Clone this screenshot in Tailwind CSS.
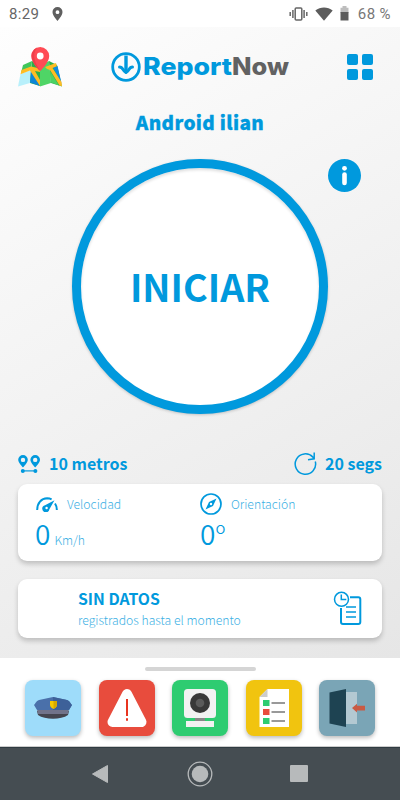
<!DOCTYPE html>
<html lang="es">
<head>
  <meta charset="UTF-8">
  <meta name="viewport" content="width=device-width, initial-scale=1.0">
  <title>ReportNow</title>
  <script src="https://cdn.jsdelivr.net/npm/@tailwindcss/browser@4"></script>
</head>
<body class="w-[400px] h-[800px] overflow-hidden flex flex-col bg-white text-[#0099dd] font-['Noto_Sans_CJK_JP',sans-serif]">

  <!-- Status bar -->
  <div class="h-[27px] shrink-0 flex items-center justify-between px-[9px] font-[Roboto,sans-serif] text-[#666]">
    <div class="flex items-center gap-[13px]">
      <span class="text-[15px] leading-[28px] tracking-[0.3px]">8:29</span>
      <svg class="w-[11px] h-[14px]" viewBox="0 0 11 14" fill="#5f5f5f"><path fill-rule="evenodd" d="M5.500 0A5 5 0 0 0 .5 5c0 3.500 5 9 5 9s5-5.500 5-9a5 5 0 0 0-5-5zm0 3.300a1.900 1.900 0 1 1 0 3.800 1.900 1.900 0 0 1 0-3.800z"/></svg>
    </div>
    <div class="flex items-center">
      <svg class="w-[19px] h-[14px] mr-[7px]" viewBox="0 0 19 14" fill="none" stroke="#666" stroke-width="1.500"><rect x="6.200" y="1" width="6.600" height="12" rx="1"/><path d="M3.900 3v8M1.200 5v4M15.100 3v8M17.800 5v4"/></svg>
      <svg class="w-[18px] h-[14px] mr-[7px]" viewBox="0 0 18 14" fill="#5c5c5c"><path d="M.3 3.600C5.300-.6 12.700-.6 17.700 3.600L9 13.800z"/></svg>
      <svg class="w-[9px] h-[15px] mr-[9px]" viewBox="0 0 9 15"><path fill="#bdbdbd" d="M2.500 0h4v1.800h2V7h-8V1.800h2z"/><path fill="#5c5c5c" d="M.5 6h8v8.500h-8z"/></svg>
      <span class="text-[15px] leading-[28px] tracking-[0.4px] text-[#777]">68 %</span>
    </div>
  </div>

  <!-- Main screen -->
  <main class="h-[631px] shrink-0 flex flex-col px-[18px] bg-linear-150 from-[#fefefe] to-[#e6e6e6]">

    <!-- Header -->
    <header class="h-[80px] flex items-center justify-between">
      <svg class="w-[44px] h-[40px]" viewBox="0 0 44 40">
        <path fill="#3fc65b" d="M5 18l9-4-1 8-10 4z"/>
        <path fill="#b8f0fb" d="M2.500 27L13 23l-1 13-12 3.500z"/>
        <path fill="#2fae4b" d="M14 14l8 4v21l-10-3 1-12z"/>
        <path fill="#0e86d4" d="M13 23l9 16-10-3.500z"/>
        <path fill="#ffbc24" d="M3.500 23L13 19.500l9 2v3.500l-5-1 5 9v6L12 23.500l-9.500 3.800z"/>
        <path fill="#4fd566" d="M22 19l9-5 2 22-11 3.500z"/>
        <path fill="#2fae4b" d="M31 14l8 4 5 21.500L33 36z"/>
        <path fill="#4bd163" d="M32 24l9 14.500-8-3z"/>
        <path fill="#0e8ce0" d="M35 20.500l4.500-1.500 4 17z"/>
        <path fill="#ffbc24" d="M27 20l11-4 .8 3.200-4.300 1.800 9 14 .5 4.300-2.500-.8L32 23l-3-1z"/>
        <path fill="#ff4b55" d="M22.200 0a9 9 0 0 0-9 9c0 7 9 15 9 15s9-8 9-15a9 9 0 0 0-9-9z"/>
        <path fill="#f03e4a" d="M19 .6a9 9 0 0 0-5 11c1 5 5 9.500 8.200 12.400C18 17 13 9 19 .6z"/>
        <circle cx="22.200" cy="9" r="3.400" fill="#fff"/>
      </svg>
      <div class="flex items-center w-[180px] mr-[7px]">
        <svg class="w-[30px] h-[30px] shrink-0" viewBox="0 0 30 30" fill="none" stroke="#0099dd"><circle cx="15" cy="15" r="13.300" stroke-width="2.800"/><path stroke-width="3.400" d="M15 3.500V20"/><path stroke-width="3" stroke-linecap="round" stroke-linejoin="round" d="M8.500 15c1.500 0 2.700 1 3.600 2.600.7 1.300 1.700 2.400 2.900 2.900 1.200-.5 2.200-1.600 2.900-2.900.9-1.600 2.100-2.600 3.600-2.600"/></svg>
        <svg class="w-[148px] h-[34px] ml-[2px] shrink-0 overflow-visible font-[Inter,sans-serif] text-[24px] font-extrabold" viewBox="0 0 148 34"><text x="0" y="25" textLength="89" lengthAdjust="spacingAndGlyphs" fill="#0099dd">Report</text><text x="89" y="25" textLength="57" lengthAdjust="spacingAndGlyphs" fill="#626262">Now</text></svg>
      </div>
      <div class="grid grid-cols-2 gap-[4px] w-[26px] mr-[9px]">
        <span class="h-[11px] rounded-[2px] bg-[#0099dd]"></span>
        <span class="h-[11px] rounded-[2px] bg-[#0099dd]"></span>
        <span class="h-[11px] rounded-[2px] bg-[#0099dd]"></span>
        <span class="h-[11px] rounded-[2px] bg-[#0099dd]"></span>
      </div>
    </header>

    <h1 class="h-[30px] leading-[29px] text-center text-[19px] tracking-[0.350px] font-black [-webkit-text-stroke:0.3px_#0099dd]">Android ilian</h1>

    <!-- Start button -->
    <div class="relative h-[277px] pt-[22px] flex justify-center">
      <button class="w-[256px] h-[255px] rounded-full border-[9px] border-[#0099dd] bg-white pb-[2px] text-[37.700px] leading-none font-bold shadow-[0_1px_3px_#0003,inset_0_2px_3px_#0002]">INICIAR</button>
      <svg class="absolute top-[22px] right-[21px] w-[33px] h-[33px]" viewBox="0 0 33 33"><circle cx="16.500" cy="16.500" r="16.500" fill="#0099dd"/><circle cx="16.500" cy="9.300" r="2.400" fill="#fff"/><path stroke="#fff" stroke-width="4.600" stroke-linecap="round" d="M16.500 15.500v8.500"/></svg>
    </div>

    <!-- Tracking settings -->
    <div class="mt-[36px] h-[34px] pb-[7px] flex justify-between text-[16px] leading-[27px] font-bold">
      <div class="flex items-center">
        <svg class="w-[22px] h-[18px] mr-[9px]" viewBox="0 0 22 18" fill="#0099dd"><path fill-rule="evenodd" d="M5 0a4.800 4.800 0 0 0-4.800 4.800C.2 8 5 12.500 5 12.500S9.800 8 9.800 4.800A4.800 4.800 0 0 0 5 0zm0 2.700a2.200 2.200 0 1 1 0 4.400 2.200 2.200 0 0 1 0-4.400zM17.200 0a4.800 4.800 0 0 0-4.800 4.800c0 3.200 4.800 7.700 4.800 7.700S22 8 22 4.800A4.800 4.800 0 0 0 17.200 0zm0 2.700a2.200 2.200 0 1 1 0 4.400 2.200 2.200 0 0 1 0-4.400z"/><circle cx="4.800" cy="15.900" r="2"/><circle cx="17.400" cy="15.900" r="2"/><path d="M5 15.300h12v1.200H5z"/></svg>
        <span>10 metros</span>
      </div>
      <div class="flex items-center">
        <svg class="w-[23px] h-[23px] mr-[8px]" viewBox="0 0 23 23" fill="none" stroke="#0099dd" stroke-width="1.500"><path d="M21.300 9.500A10.200 10.200 0 1 1 19 5.200l1.200 1.600M20.200.5v6.300l-6.200 1"/></svg>
        <span>20 segs</span>
      </div>
    </div>

    <!-- Speed and heading -->
    <section class="h-[77px] shrink-0 rounded-[9px] bg-white shadow-[0_3px_5px_#0003] grid grid-cols-[165px_1fr] pl-[18px] pt-[8px]">
      <div>
        <div class="h-[24px] flex items-center">
          <svg class="w-[22px] h-[15px] mr-[9px]" viewBox="0 0 22 15" fill="none" stroke="#0099dd"><path stroke-width="2" d="M1.200 13c0-7 4-11.500 10-11.700 1.500 0 3 .3 4.400 1M19 6.500c1.200 1.800 1.900 4 1.800 6.500"/><path fill="#0099dd" stroke="none" d="M18.500 3.200L9 8.200a3.600 3.600 0 1 0 4.400 4z"/><circle cx="10.600" cy="11" r="1.200" fill="#fff" stroke="none"/></svg>
          <span class="text-[12.200px] leading-[24px] font-light text-[#3db0e4]">Velocidad</span>
        </div>
        <div class="h-[38px] -mt-[2px] flex items-baseline">
          <span class="-ml-px text-[28px] leading-[38px] font-[350]">0</span>
          <span class="ml-[4px] text-[12.200px] font-light text-[#3db0e4]">Km/h</span>
        </div>
      </div>
      <div>
        <div class="h-[24px] flex items-center -ml-[1px]">
          <svg class="w-[22px] h-[22px] mr-[9px]" viewBox="0 0 22 22"><circle cx="11" cy="11" r="10" fill="none" stroke="#0099dd" stroke-width="1.700"/><path fill="#0099dd" d="M16.500 5.500L13 13 5.500 16.500 9 9z"/><circle cx="11" cy="11" r="1.200" fill="#fff"/></svg>
          <span class="text-[12.200px] leading-[24px] font-light text-[#3db0e4]">Orientación</span>
        </div>
        <div class="-mt-[2px] -ml-px text-[28px] leading-[38px] font-[350]">0<span class="text-[25px] font-light">º</span></div>
      </div>
    </section>

    <!-- Recorded data -->
    <section class="mt-[18px] h-[59px] shrink-0 rounded-[9px] bg-white shadow-[0_3px_5px_#0003] flex justify-between pl-[60px] pr-[20px]">
      <div class="pt-[9px]">
        <h2 class="text-[15.800px] leading-[22px] font-bold">SIN DATOS</h2>
        <p class="text-[12.200px] leading-[20px] font-light text-[#3db0e4]">registrados hasta el momento</p>
      </div>
      <svg class="mt-[12px] w-[29px] h-[35px]" viewBox="0 0 29 35" fill="none" stroke="#0099dd"><path stroke-width="2" d="M17 6.200h8.300a2 2 0 0 1 2 2V31a2 2 0 0 1-2 2H10a2 2 0 0 1-2-2V17"/><circle cx="8.500" cy="8.300" r="7" stroke-width="1.500"/><path stroke-width="1.500" d="M8.300 3.500v5h5M13 16h10M13 21h10M13 26h10"/></svg>
    </section>
  </main>

  <!-- Shortcuts -->
  <section class="h-[89px] shrink-0 bg-white border-b border-[#ccc]">
    <div class="mt-[9px] mx-auto w-[111px] h-[4px] rounded-full bg-[#d5d5d5]"></div>
    <div class="mt-[9px] px-[25px] flex justify-between">
      <button class="w-[56px] h-[56px] rounded-[8px] bg-[#9edcfa] shadow-[0_2px_4px_#0004]">
        <svg class="w-[56px] h-[56px]" viewBox="0 0 56 56"><path fill="#45454f" d="M12 31h32l-1 4c-7 5-23 5-30 0z"/><path fill="#71738a" d="M12 29h32l-1 5H13z"/><path fill="#4a70aa" d="M9 25c2-2 2-4 5-5l14-3 14 3c3 1 3 3 5 5l-3 5H12z"/><path fill="#3d6199" d="M28 17l14 3c3 1 3 3 5 5l-3 5H28z"/><path fill="#f5c900" d="M25 21h7v4c0 2-2 3-3.500 4C27 28 25 27 25 25z"/><path fill="#d6a900" d="M28.500 21H32v4c0 2-2 3-3.500 4z"/></svg>
      </button>
      <button class="w-[56px] h-[56px] rounded-[8px] bg-[#e84c3d] shadow-[0_2px_4px_#0004]">
        <svg class="w-[56px] h-[56px]" viewBox="0 0 56 56"><path fill="#fff" stroke="#fff" stroke-width="10" stroke-linejoin="round" d="M28 14l14.500 28h-29z"/><path stroke="#e8341f" stroke-width="2" d="M28 19v17M28 38.300v2.400"/></svg>
      </button>
      <button class="w-[56px] h-[56px] rounded-[8px] bg-[#2ecc71] shadow-[0_2px_4px_#0004]">
        <svg class="w-[56px] h-[56px]" viewBox="0 0 56 56"><path fill="#888" d="M23 35h10v7H23z"/><rect x="12" y="9" width="32" height="29" rx="3.500" fill="#f2f2f2"/><circle cx="28" cy="23" r="10" fill="#383838"/><circle cx="28" cy="23" r="4.300" fill="#5a5a5a"/><path fill="#f2f2f2" d="M14 41h28v6H14z"/></svg>
      </button>
      <button class="w-[56px] h-[56px] rounded-[8px] bg-[#f1c40f] shadow-[0_2px_4px_#0004]">
        <svg class="w-[56px] h-[56px]" viewBox="0 0 56 56"><path fill="#fff" d="M21.500 9H43v38H13.500V17z"/><path fill="#ccc" d="M21.500 9v8h-8z"/><path fill="#2ecc71" d="M17 20h6.500v6H17zM17 38h6.500v6H17z"/><path fill="#e84c3d" d="M17 29h6.500v6H17z"/><path stroke="#999" stroke-width="2" d="M25.500 23H39M25.500 32H39M25.500 41H39"/></svg>
      </button>
      <button class="w-[56px] h-[56px] rounded-[8px] bg-[#7aa5b6] shadow-[0_2px_4px_#0004]">
        <svg class="w-[56px] h-[56px]" viewBox="0 0 56 56"><path fill="#b3c9d2" d="M26 12h12v32H26z"/><path fill="#1e4352" d="M10.500 12.500L27 9v38l-16.500-3.500z"/><path fill="#c95a43" d="M33 28l5-4.200v2h8v4.600h-8v2z"/></svg>
      </button>
    </div>
  </section>

  <!-- Android navigation -->
  <nav class="h-[53px] shrink-0 bg-[#454d52] border-t border-[#303c42] flex items-center justify-between pl-[91px] pr-[92px] pb-px">
    <svg class="w-[18px] h-[20px]" viewBox="0 0 18 20" fill="#b7babb" stroke="#b7babb" stroke-linejoin="round" stroke-width="1"><path d="M16.500 1.500v17L1.500 10z"/></svg>
    <svg class="w-[26px] h-[26px]" viewBox="0 0 26 26"><circle cx="13" cy="13" r="11.800" fill="none" stroke="#b7babb" stroke-width="1.300"/><circle cx="13" cy="13" r="8.300" fill="#b7babb"/></svg>
    <span class="w-[18px] h-[17px] rounded-[1px] bg-[#b7babb]"></span>
  </nav>

</body>
</html>
